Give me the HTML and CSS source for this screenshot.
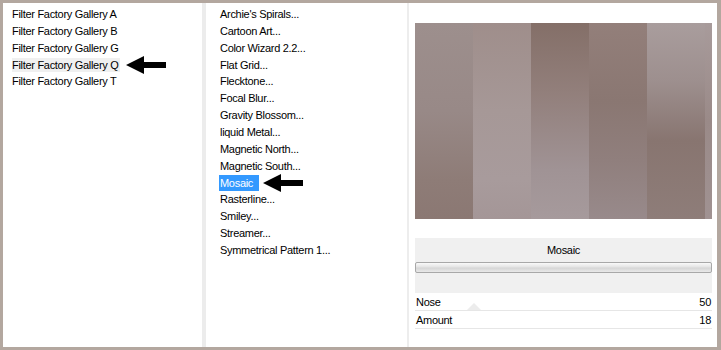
FILE: index.html
```html
<!DOCTYPE html>
<html>
<head>
<meta charset="utf-8">
<link rel="stylesheet" href="styles.css">
</head>
<body>
<div class="frame">
  <div class="panel left">
    <ul class="list">
      <li>Filter Factory Gallery A</li>
      <li>Filter Factory Gallery B</li>
      <li>Filter Factory Gallery G</li>
      <li><span class="soft">Filter Factory Gallery Q</span><svg class="arrow" width="40" height="20" viewBox="0 0 40 20"><polygon points="0,10 18,1 18,7 40,7 40,13 18,13 18,19" fill="#000"/></svg></li>
      <li>Filter Factory Gallery T</li>
    </ul>
  </div>
  <div class="sep"></div>
  <div class="panel mid">
    <ul class="list">
      <li>Archie's Spirals...</li>
      <li>Cartoon Art...</li>
      <li>Color Wizard 2.2...</li>
      <li>Flat Grid...</li>
      <li>Flecktone...</li>
      <li>Focal Blur...</li>
      <li>Gravity Blossom...</li>
      <li>liquid Metal...</li>
      <li>Magnetic North...</li>
      <li>Magnetic South...</li>
      <li><span class="sel">Mosaic</span><svg class="arrow a2" width="40" height="20" viewBox="0 0 40 20"><polygon points="0,10 18,1 18,7 40,7 40,13 18,13 18,19" fill="#000"/></svg></li>
      <li>Rasterline...</li>
      <li>Smiley...</li>
      <li>Streamer...</li>
      <li>Symmetrical Pattern 1...</li>
    </ul>
  </div>
  <div class="sep2"></div>
  <div class="panel right">
    <div class="preview">
      <div class="s s1"></div>
      <div class="s s2"></div>
      <div class="s s3"></div>
      <div class="s s4"></div>
      <div class="s s5"></div>
      <div class="s s6"></div>
    </div>
    <div class="filterbox">
      <div class="ftitle">Mosaic</div>
      <div class="bar"></div>
    </div>
    <div class="param first"><span>Nose</span><span>50</span></div>
    <div class="param"><span>Amount</span><span>18</span></div>
  </div>
</div>
</body>
</html>
```

FILE: styles.css
```css
html, body {
  margin: 0;
  padding: 0;
}
body {
  width: 721px;
  height: 350px;
  overflow: hidden;
  font-family: "Liberation Sans", Arial, sans-serif;
  font-size: 11px;
  color: #000;
}
.frame {
  box-sizing: border-box;
  width: 721px;
  height: 350px;
  background: #b3a79f;
  padding: 3px 4px 3px 3px;
  display: flex;
}
.panel {
  background: #fff;
  height: 100%;
}
.left {
  width: 199px;
}
.sep {
  width: 4px;
  background: #ececec;
}
.mid {
  width: 201px;
}
.sep2 {
  width: 2px;
  background: #ededed;
}
.right {
  flex: 1;
  box-sizing: border-box;
  padding: 20px 5px 0 6px;
  display: flex;
  flex-direction: column;
}
.list {
  list-style: none;
  margin: 0;
  padding: 3px 0 0 0;
  letter-spacing: -0.3px;
}
.list li {
  line-height: 16.86px;
  height: 16.86px;
  white-space: nowrap;
}
.left .list li {
  padding-left: 9px;
}
.mid .list li {
  padding-left: 14px;
}
.soft {
  background: #f0f0f0;
  padding: 1px 1px 1px 0;
}
.sel {
  background: #3399ff;
  color: #fff;
  padding: 2px 6px 2px 1px;
  margin-left: -1px;
}
.arrow {
  display: inline-block;
  vertical-align: middle;
  margin: -6px 0 -4px 6px;
}
.a2 {
  margin-left: 4px;
}
.preview {
  height: 196px;
  display: flex;
}
.s {
  width: 58px;
  height: 100%;
}
.s1 { background: linear-gradient(#9d8f8d, #988987 45%, #8e7c77 80%, #8b7873); }
.s2 { background: linear-gradient(#9f8e8b, #a69897 45%, #a89b9c 80%, #a49697); }
.s3 { background: linear-gradient(#846f68, #927f7b 35%, #a09395 75%, #a69a9c); }
.s4 { background: linear-gradient(#937f7a, #8a7772 40%, #907f7d 70%, #988a8b); }
.s5 { background: linear-gradient(#a99d9d, #9d8f8e 30%, #887570 60%, #8e7d79); }
.s6 { width: 7px; background: linear-gradient(#a89b9b, #9a8a88 50%, #a09292); }
.filterbox {
  margin-top: 19px;
  height: 55px;
  background: #f0f0f0;
  box-sizing: border-box;
  padding-top: 5px;
}
.ftitle {
  text-align: center;
  line-height: 14px;
  letter-spacing: -0.3px;
}
.bar {
  margin-top: 5px;
  height: 11px;
  box-sizing: border-box;
  border: 1px solid #a8a8a8;
  border-radius: 2px;
  background: linear-gradient(#fafafa, #e4e4e4 45%, #d6d6d6 55%, #e8e8e8);
}
.param {
  height: 18px;
  box-sizing: border-box;
  border-bottom: 1px solid #e6e6e6;
  display: flex;
  justify-content: space-between;
  align-items: center;
  padding: 1px 1px 0 1px;
  letter-spacing: -0.3px;
  position: relative;
}
.param.first::after {
  content: "";
  position: absolute;
  left: 52px;
  bottom: 0;
  width: 0;
  height: 0;
  border-left: 7px solid transparent;
  border-right: 7px solid transparent;
  border-bottom: 7px solid #ececec;
}
```
